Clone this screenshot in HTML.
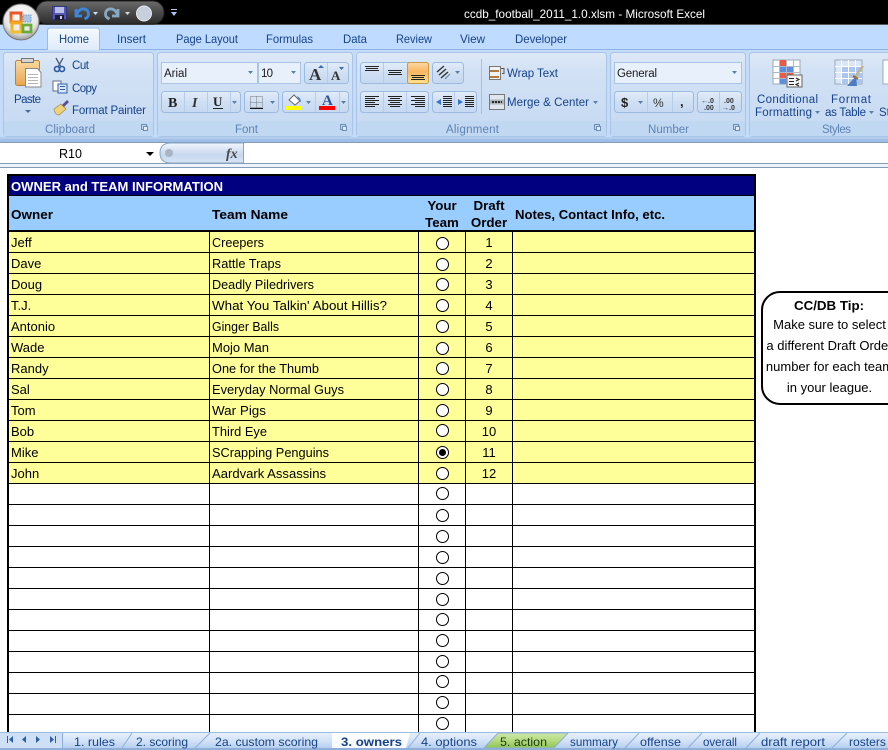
<!DOCTYPE html>
<html><head><meta charset="utf-8"><style>
html,body{margin:0;padding:0;background:#fff;width:888px;height:750px;overflow:hidden}
svg{display:block}
text{font-family:"Liberation Sans",Arial,sans-serif}
text.s{font-family:"Liberation Serif",serif}
.u{font-size:11.5px;fill:#15428b}
.g{font-size:11.5px;fill:#5f83b3}
.k{font-size:11.5px;fill:#1a1a1a}
.c{font-size:13px;fill:#000}
.b{font-size:13.33px;font-weight:bold;fill:#000}
.m{text-anchor:middle}
.t{font-size:12px;fill:#15428b}
</style></head><body>
<svg width="888" height="750" viewBox="0 0 888 750" xmlns="http://www.w3.org/2000/svg">
<defs>
<linearGradient id="gr" x1="0" y1="0" x2="0" y2="1"><stop offset="0" stop-color="#dfe9f7"/><stop offset=".2" stop-color="#d3e2f5"/><stop offset="1" stop-color="#c5d9f2"/></linearGradient>
<linearGradient id="hm" x1="0" y1="0" x2="0" y2="1"><stop offset="0" stop-color="#f6fafe"/><stop offset="1" stop-color="#dfeafa"/></linearGradient>
<linearGradient id="bt" x1="0" y1="0" x2="0" y2="1"><stop offset="0" stop-color="#e2ecf9"/><stop offset=".5" stop-color="#cfdff3"/><stop offset="1" stop-color="#c6d9f1"/></linearGradient>
<linearGradient id="or" x1="0" y1="0" x2="0" y2="1"><stop offset="0" stop-color="#fcd9a5"/><stop offset=".45" stop-color="#fbb55d"/><stop offset="1" stop-color="#fee38f"/></linearGradient>
<linearGradient id="qa" x1="0" y1="0" x2="0" y2="1"><stop offset="0" stop-color="#6b6b6b"/><stop offset=".5" stop-color="#4a4a4a"/><stop offset="1" stop-color="#2a2a2a"/></linearGradient>
<linearGradient id="tb" x1="0" y1="0" x2="0" y2="1"><stop offset="0" stop-color="#e8f1fc"/><stop offset=".5" stop-color="#d2e2f7"/><stop offset="1" stop-color="#adc9ee"/></linearGradient>
<linearGradient id="tg" x1="0" y1="0" x2="0" y2="1"><stop offset="0" stop-color="#cbe7a8"/><stop offset=".5" stop-color="#b5da80"/><stop offset="1" stop-color="#8ec455"/></linearGradient>
<linearGradient id="tw" x1="0" y1="0" x2="0" y2="1"><stop offset="0" stop-color="#fff"/><stop offset="1" stop-color="#f4f8fe"/></linearGradient>
<linearGradient id="fx" x1="0" y1="0" x2="0" y2="1"><stop offset="0" stop-color="#f2f6fc"/><stop offset=".6" stop-color="#c6d7ee"/><stop offset="1" stop-color="#d9e5f5"/></linearGradient>
<radialGradient id="ob" cx=".5" cy=".35" r=".65"><stop offset="0" stop-color="#ffffff"/><stop offset=".7" stop-color="#e6e6e6"/><stop offset="1" stop-color="#9a9a9a"/></radialGradient>
<linearGradient id="pb" x1="0" y1="0" x2="0" y2="1"><stop offset="0" stop-color="#fbd9a0"/><stop offset="1" stop-color="#eaa650"/></linearGradient>
<linearGradient id="lo" x1="0" y1="0" x2="0" y2="1"><stop offset="0" stop-color="#e8562e"/><stop offset="1" stop-color="#e88a20"/></linearGradient>
<linearGradient id="ly" x1="0" y1="0" x2="0" y2="1"><stop offset="0" stop-color="#f6a81c"/><stop offset="1" stop-color="#f0c030"/></linearGradient>
</defs>

<!-- title bar -->
<rect width="888" height="25" fill="#000"/>
<rect y="24" width="888" height="1" fill="#555"/>
<rect x="36" y="1" width="128" height="23" rx="11" fill="url(#qa)" stroke="#222"/>
<!-- save -->
<rect x="52.500" y="6.500" width="14" height="13" fill="#5558b0" stroke="#2c2f80" stroke-width=".8"/>
<rect x="55" y="7" width="9" height="6" fill="#b9bde8"/>
<rect x="55" y="15" width="9" height="5" fill="#1c1c3c"/><rect x="60" y="16" width="2" height="3" fill="#d0d0e0"/>
<!-- undo -->
<path d="M76 9v7h6 M76.500 15c2-8 12-8 12-1c0 3-2 4-4 5" fill="none" stroke="#3f86da" stroke-width="2.800"/>
<path d="M93 12h5l-2.500 3z" fill="#cfe0f5"/>
<!-- redo -->
<path d="M118 9v7h-6 M117.500 15c-2-8-12-8-12-1c0 3 2 4 4 5" fill="none" stroke="#86a8c2" stroke-width="2.800"/>
<path d="M125 12h5l-2.500 3z" fill="#dcdcdc"/>
<circle cx="144" cy="13.500" r="7.500" fill="#c6cfde" stroke="#e8e8e8"/>
<path d="M171 9h6v1h-6z M171 12h6l-3 4z" fill="#a8c8f0"/>
<text x="464" y="18" font-size="12" fill="#fff" textLength="241" lengthAdjust="spacingAndGlyphs">ccdb_football_2011_1.0.xlsm - Microsoft Excel</text>

<!-- tabs strip -->
<rect y="25" width="888" height="25" fill="#bfdbff"/>
<rect y="49" width="888" height="1" fill="#8db2e3"/>
<rect y="50" width="888" height="89" fill="#c4dbf9"/>
<path d="M47.500 50v-19q0-3 3-3h46q3 0 3 3v19" fill="url(#hm)" stroke="#9dbbe0"/>
<text class="t" x="59" y="43" textLength="30" lengthAdjust="spacingAndGlyphs">Home</text>
<text class="t" x="117" y="43" textLength="29" lengthAdjust="spacingAndGlyphs">Insert</text>
<text class="t" x="176" y="43" textLength="62" lengthAdjust="spacingAndGlyphs">Page Layout</text>
<text class="t" x="266" y="43" textLength="47" lengthAdjust="spacingAndGlyphs">Formulas</text>
<text class="t" x="343" y="43" textLength="24" lengthAdjust="spacingAndGlyphs">Data</text>
<text class="t" x="396" y="43" textLength="36" lengthAdjust="spacingAndGlyphs">Review</text>
<text class="t" x="460" y="43" textLength="25" lengthAdjust="spacingAndGlyphs">View</text>
<text class="t" x="515" y="43" textLength="52" lengthAdjust="spacingAndGlyphs">Developer</text>

<!-- office button -->
<circle cx="21" cy="22" r="18" fill="url(#ob)" stroke="#777"/>
<path d="M11 13h10v9H11z" fill="none" stroke="url(#lo)" stroke-width="3"/>
<path d="M12 23h9v9h-9z" fill="none" stroke="url(#ly)" stroke-width="3"/>
<path d="M23 25h8v7h-8z" fill="none" stroke="#6bab3e" stroke-width="2.800"/>
<rect x="23" y="15" width="8" height="7" fill="#a9c8ea" stroke="#6f97c8" stroke-dasharray="1.500 1"/>

<!-- groups -->
<g stroke="#a9c4e6" fill="url(#gr)">
<rect x="3.500" y="52.500" width="150" height="84" rx="3"/>
<rect x="157.500" y="52.500" width="195" height="84" rx="3"/>
<rect x="356.500" y="52.500" width="250" height="84" rx="3"/>
<rect x="610.500" y="52.500" width="135" height="84" rx="3"/>
<rect x="749.500" y="52.500" width="145" height="84" rx="3"/>
</g>
<g fill="#c1d8f2">
<rect x="4" y="121" width="149" height="15"/><rect x="158" y="121" width="194" height="15"/><rect x="357" y="121" width="249" height="15"/><rect x="611" y="121" width="134" height="15"/><rect x="750" y="121" width="138" height="15"/>
</g>
<text class="g" x="45" y="133" textLength="50">Clipboard</text>
<text class="g" x="235" y="133" textLength="23">Font</text>
<text class="g" x="446" y="133" textLength="53">Alignment</text>
<text class="g" x="648" y="133" textLength="41">Number</text>
<text class="g" x="822" y="133" textLength="29">Styles</text>
<g fill="none" stroke="#6a8cb5"><rect x="141.500" y="124.500" width="5" height="5"/><rect x="340.500" y="124.500" width="5" height="5"/><rect x="594.500" y="124.500" width="5" height="5"/><rect x="733.500" y="124.500" width="5" height="5"/></g>
<g fill="#e4eefb"><rect x="143.500" y="126.500" width="4" height="4" stroke="#6a8cb5"/><rect x="342.500" y="126.500" width="4" height="4" stroke="#6a8cb5"/><rect x="596.500" y="126.500" width="4" height="4" stroke="#6a8cb5"/><rect x="735.500" y="126.500" width="4" height="4" stroke="#6a8cb5"/></g>

<!-- clipboard -->
<rect x="15.500" y="60.500" width="24" height="25" rx="2" fill="url(#pb)" stroke="#b58340"/>
<rect x="21.500" y="58.500" width="12" height="4" fill="#d6d6d6" stroke="#777"/>
<path d="M25.500 68.500h12l3.500 4v14.500H25.500z" fill="#fff" stroke="#8a8a8a"/>
<path d="M28 74.500h10M28 77.500h10M28 80.500h10M28 83.500h10" stroke="#b5b5b5"/>
<text class="u" x="14" y="103" textLength="27">Paste</text>
<path d="M25 110h6l-3 3z" fill="#4a6a9a"/>
<path d="M56 58l5 9M63 58l-5 9" stroke="#4f5f7a" stroke-width="1.300"/>
<circle cx="57" cy="69" r="2.500" fill="none" stroke="#2c56a8" stroke-width="1.600"/><circle cx="62" cy="69" r="2.500" fill="none" stroke="#2c56a8" stroke-width="1.600"/>
<text class="u" x="72" y="69" textLength="17">Cut</text>
<rect x="53" y="81" width="8" height="10" fill="#fff" stroke="#6a6a8a"/><rect x="58" y="84" width="9" height="9" fill="#dbe8fa" stroke="#2f5da8"/>
<path d="M60 86.500h5M60 89.500h5" stroke="#2f5da8"/>
<text class="u" x="72" y="92" textLength="25">Copy</text>
<path d="M54 109l7-5l5 5l-7 6q-4 0-5-6z" fill="#f1d27a" stroke="#a08a40" stroke-width=".7"/>
<path d="M62 105l5-5l2 2l-5 5z" fill="#5a4aa0"/>
<text class="u" x="72" y="114" textLength="74">Format Painter</text>

<!-- font -->
<rect x="161.500" y="62.500" width="96" height="21" fill="#e8f0fb" stroke="#a9c4e6"/>
<rect x="258.500" y="62.500" width="42" height="21" fill="#e8f0fb" stroke="#a9c4e6"/>
<text class="k" x="164" y="77" font-size="12" textLength="23">Arial</text>
<text class="k" x="261" y="77" textLength="12">10</text>
<path d="M248 71h5l-2.500 3zM291 71h5l-2.500 3z" fill="#5a7ea8"/>
<rect x="304.500" y="62.500" width="44" height="21" rx="3" fill="url(#bt)" stroke="#9dbbe0"/>
<path d="M327.500 63v20" stroke="#b6cce8"/>
<text class="s" x="309" y="80" font-size="17" font-weight="bold" fill="#333">A</text>
<path d="M318 68h6l-3-3z" fill="#3d6bb0"/>
<text class="s" x="331" y="80" font-size="13" font-weight="bold" fill="#333">A</text>
<path d="M339 67h5l-2.500 3z" fill="#3d6bb0"/>
<rect x="161.500" y="91.500" width="79" height="21" rx="3" fill="url(#bt)" stroke="#9dbbe0"/>
<path d="M184.500 92v20M207.500 92v20M230.500 92v20" stroke="#b6cce8"/>
<text class="s" x="168" y="107" font-size="14" font-weight="bold" fill="#222">B</text>
<text class="s" x="192" y="107" font-size="14" font-weight="bold" font-style="italic" fill="#333">I</text>
<text class="s" x="213" y="106" font-size="13" font-weight="bold" fill="#222">U</text>
<path d="M213 108.500h10" stroke="#222"/>
<path d="M232 101h5l-2.500 3z" fill="#5a7ea8"/>
<rect x="244.500" y="91.500" width="34" height="21" rx="3" fill="url(#bt)" stroke="#9dbbe0"/>
<path d="M250.500 96.500h12v11h-12zM256.500 96.500v11M250.500 102.500h12" fill="none" stroke="#777" stroke-dasharray="1 1"/>
<path d="M250 108.500h13" stroke="#111"/>
<path d="M270 101h5l-2.500 3z" fill="#5a7ea8"/>
<rect x="282.500" y="91.500" width="66" height="21" rx="3" fill="url(#bt)" stroke="#9dbbe0"/>
<path d="M315.500 92v20M339.500 92v20" stroke="#b6cce8"/>
<path d="M289 100l5-5l6 6l-5 4z" fill="#fff" stroke="#666"/><path d="M297 96q4 2 4 6l-2-1z" fill="#4a7fc8"/>
<rect x="286" y="106" width="16" height="4" fill="#ff0"/>
<path d="M306 101h5l-2.500 3z" fill="#5a7ea8"/>
<text class="s" x="322" y="105" font-size="15" font-weight="bold" fill="#2f5597">A</text>
<rect x="319" y="106" width="16" height="4" fill="#f00"/>
<path d="M341 101h5l-2.500 3z" fill="#5a7ea8"/>

<!-- alignment -->
<rect x="360.500" y="62.500" width="68" height="21" rx="3" fill="url(#bt)" stroke="#9dbbe0"/>
<path d="M383.500 63v20" stroke="#b6cce8"/>
<rect x="407.500" y="62.500" width="21" height="21" rx="2" fill="url(#or)" stroke="#c79a52"/>
<path d="M365 66.500h14M366 68.500h12M365 70.500h14M388 70.500h14M389 72.500h12M388 74.500h14M411 75.500h14M412 77.500h12M411 79.500h14" stroke="#222"/>
<rect x="432.500" y="62.500" width="31" height="21" rx="3" fill="url(#bt)" stroke="#9dbbe0"/>
<path d="M437 72l7-6M439 75l7-6M441 78l7-6" stroke="#333" stroke-width="1.400"/><path d="M445 79l5-5" stroke="#5a7ea8"/>
<path d="M455 71h5l-2.500 3z" fill="#5a7ea8"/>
<rect x="360.500" y="91.500" width="68" height="21" rx="3" fill="url(#bt)" stroke="#9dbbe0"/>
<path d="M383.500 92v20M406.500 92v20" stroke="#b6cce8"/>
<path d="M365 96.500h14M365 98.500h10M365 100.500h14M365 102.500h10M365 104.500h14M365 106.500h10M388 96.500h14M390 98.500h10M388 100.500h14M390 102.500h10M388 104.500h14M390 106.500h10M411 96.500h14M415 98.500h10M411 100.500h14M415 102.500h10M411 104.500h14M415 106.500h10" stroke="#222"/>
<rect x="432.500" y="91.500" width="44" height="21" rx="3" fill="url(#bt)" stroke="#9dbbe0"/>
<path d="M454.500 92v20" stroke="#b6cce8"/>
<path d="M443 96.500h9M443 98.500h9M443 100.500h9M443 102.500h9M443 104.500h9M443 106.500h9M465 96.500h9M465 98.500h9M465 100.500h9M465 102.500h9M465 104.500h9M465 106.500h9" stroke="#222"/>
<path d="M436 102l5-3v6zM463 102l-5-3v6z" fill="#3b74c8"/>
<path d="M481.500 59v55" stroke="#a9bfda"/>
<rect x="489.500" y="66.500" width="11" height="13" fill="#f2f2f2" stroke="#777"/>
<path d="M490 71h9" stroke="#b07a40" stroke-width="2"/><path d="M490 77h9" stroke="#b07a40" stroke-width="2"/><path d="M501 68.500h3v5h-2" fill="none" stroke="#555"/>
<text class="u" x="507" y="77" textLength="51">Wrap Text</text>
<rect x="489.500" y="94.500" width="15" height="15" fill="#dfe6ee" stroke="#777"/>
<path d="M490 102h14" stroke="#555" stroke-width="5" opacity=".35"/>
<path d="M492 102h10" stroke="#222" stroke-width="2" stroke-dasharray="2 1"/>
<text class="u" x="507" y="106" textLength="82">Merge &amp; Center</text>
<path d="M593 101h5l-2.500 3z" fill="#5a7ea8"/>

<!-- number -->
<rect x="614.500" y="62.500" width="127" height="21" fill="#e8f0fb" stroke="#a9c4e6"/>
<text class="k" x="617" y="77" textLength="40">General</text>
<path d="M732 71h5l-2.500 3z" fill="#5a7ea8"/>
<rect x="614.500" y="91.500" width="79" height="21" rx="3" fill="url(#bt)" stroke="#9dbbe0"/>
<path d="M647.500 92v20M672.500 92v20" stroke="#b6cce8"/>
<text x="621" y="107" font-size="13" font-weight="bold" fill="#222">$</text>
<path d="M638 101h5l-2.500 3z" fill="#5a7ea8"/>
<text x="653" y="107" font-size="12" fill="#333">%</text>
<text x="680" y="106" font-size="13" font-weight="bold" fill="#222">,</text>
<rect x="697.500" y="91.500" width="44" height="21" rx="3" fill="url(#bt)" stroke="#9dbbe0"/>
<path d="M719.500 92v20" stroke="#b6cce8"/>
<text x="701" y="103" font-size="7" font-weight="bold" fill="#333">←.0</text>
<text x="704" y="110" font-size="7" font-weight="bold" fill="#333">.00</text>
<text x="724" y="103" font-size="7" font-weight="bold" fill="#333">.00</text>
<text x="722" y="110" font-size="7" font-weight="bold" fill="#333">→.0</text>

<!-- styles -->
<g stroke="#9aa8b8" fill="#fff">
<rect x="773" y="60" width="27" height="24"/>
<rect x="835" y="60" width="27" height="24" fill="#dbe7f7"/>
<rect x="883" y="60" width="10" height="24"/>
</g>
<rect x="779" y="60" width="7" height="6" fill="#ec5a46"/><rect x="779" y="66" width="14" height="6" fill="#5d8fe0"/><rect x="779" y="72" width="14" height="6" fill="#ec5a46"/><rect x="779" y="78" width="7" height="6" fill="#5d8fe0"/>
<path d="M779.500 60v24M786.500 60v24M793.500 60v24M773 66.500h27M773 72.500h27M773 78.500h27" stroke="#aeb8c6"/>
<rect x="787" y="75" width="15" height="12" fill="#f4f4f4" stroke="#666"/>
<path d="M789 78.500h5M789 81.500h5M789 84.500h5M796 78l3 1.500l-3 1.500M799 83l-3 1.500l3 1.500" stroke="#222" fill="none"/>
<rect x="842" y="66" width="20" height="18" fill="#a9c5f0"/>
<path d="M841.500 60v24M848.500 60v24M855.500 60v24M835 66.500h27M835 72.500h27M835 78.500h27" stroke="#fff"/>
<path d="M863 66l-9 12" stroke="#c0b090" stroke-width="2.500"/><path d="M856 76l-9 10h10z" fill="#4e7cc0"/><path d="M853 76l5 3" stroke="#a56a2a" stroke-width="2"/>
<text class="u" x="757" y="103" textLength="61">Conditional</text>
<text class="u" x="755" y="116" textLength="57">Formatting</text>
<path d="M815 111h5l-2.500 3z" fill="#5a7ea8"/>
<text class="u" x="831" y="103" textLength="40">Format</text>
<text class="u" x="825" y="116" textLength="41">as Table</text>
<path d="M869 111h5l-2.500 3z" fill="#5a7ea8"/>
<text class="u" x="879" y="116">St</text>

<!-- formula bar -->
<rect y="137" width="888" height="6" fill="#b3cdef"/>
<rect y="139" width="888" height="3" fill="#9fbfe8"/>
<rect y="142" width="888" height="22" fill="#fff"/>
<rect y="142" width="888" height="1" fill="#7f9db9"/>
<rect y="163" width="888" height="1" fill="#7f9db9"/>
<rect y="164" width="888" height="3" fill="#eef3fa"/>
<rect y="167" width="888" height="1" fill="#7f9db9"/>
<text x="59" y="158" font-size="12.500" fill="#000">R10</text>
<path d="M146 152h8l-4 4z" fill="#000"/>
<path d="M243.500 143H171q-11 0-11 10t11 10h72.500z" fill="url(#fx)" stroke="#8aa6c8"/>
<circle cx="169" cy="153" r="4" fill="#a9b4c4"/>
<text class="s" x="226" y="158" font-size="14" font-style="italic" font-weight="bold" fill="#4a4a4a">fx</text>

<!-- sheet -->
<rect x="7" y="174" width="749" height="560" fill="#000"/>
<rect x="9" y="176" width="745" height="19" fill="#000080"/>
<rect x="9" y="196" width="745" height="34" fill="#99ccff"/>
<rect x="9" y="232" width="745" height="252" fill="#ffff99"/>
<rect x="9" y="484" width="745" height="250" fill="#fff"/>
<path d="M9 252.500H754M9 273.500H754M9 294.500H754M9 315.500H754M9 336.500H754M9 357.500H754M9 378.500H754M9 399.500H754M9 420.500H754M9 441.500H754M9 462.500H754M9 483.500H754M9 504.500H754M9 525.500H754M9 546.500H754M9 567.500H754M9 588.500H754M9 609.500H754M9 630.500H754M9 651.500H754M9 672.500H754M9 693.500H754M9 714.500H754" stroke="#000"/>
<path d="M209.500 232V734M418.500 232V734M465.500 232V734M512.500 232V734" stroke="#000"/>
<text x="11" y="191" font-size="13.330" font-weight="bold" fill="#fff" textLength="212" lengthAdjust="spacingAndGlyphs">OWNER and TEAM INFORMATION</text>
<text class="b" x="11" y="219" textLength="42" lengthAdjust="spacingAndGlyphs">Owner</text>
<text class="b" x="212" y="219" textLength="76" lengthAdjust="spacingAndGlyphs">Team Name</text>
<text class="b m" x="442" y="210">Your</text>
<text class="b m" x="442" y="227">Team</text>
<text class="b m" x="489" y="210">Draft</text>
<text class="b m" x="489" y="227">Order</text>
<text class="b" x="515" y="219" textLength="150" lengthAdjust="spacingAndGlyphs">Notes, Contact Info, etc.</text>

<g>
<text class="c" x="11" y="247">Jeff</text><text class="c" x="212" y="247" textLength="52" lengthAdjust="spacingAndGlyphs">Creepers</text><text class="c m" x="489" y="247">1</text>
<text class="c" x="11" y="268">Dave</text><text class="c" x="212" y="268" textLength="69" lengthAdjust="spacingAndGlyphs">Rattle Traps</text><text class="c m" x="489" y="268">2</text>
<text class="c" x="11" y="289">Doug</text><text class="c" x="212" y="289" textLength="102" lengthAdjust="spacingAndGlyphs">Deadly Piledrivers</text><text class="c m" x="489" y="289">3</text>
<text class="c" x="11" y="310">T.J.</text><text class="c" x="212" y="310" textLength="175" lengthAdjust="spacingAndGlyphs">What You Talkin' About Hillis?</text><text class="c m" x="489" y="310">4</text>
<text class="c" x="11" y="331">Antonio</text><text class="c" x="212" y="331" textLength="67" lengthAdjust="spacingAndGlyphs">Ginger Balls</text><text class="c m" x="489" y="331">5</text>
<text class="c" x="11" y="352">Wade</text><text class="c" x="212" y="352" textLength="57" lengthAdjust="spacingAndGlyphs">Mojo Man</text><text class="c m" x="489" y="352">6</text>
<text class="c" x="11" y="373">Randy</text><text class="c" x="212" y="373" textLength="107" lengthAdjust="spacingAndGlyphs">One for the Thumb</text><text class="c m" x="489" y="373">7</text>
<text class="c" x="11" y="394">Sal</text><text class="c" x="212" y="394" textLength="132" lengthAdjust="spacingAndGlyphs">Everyday Normal Guys</text><text class="c m" x="489" y="394">8</text>
<text class="c" x="11" y="415">Tom</text><text class="c" x="212" y="415" textLength="54" lengthAdjust="spacingAndGlyphs">War Pigs</text><text class="c m" x="489" y="415">9</text>
<text class="c" x="11" y="436">Bob</text><text class="c" x="212" y="436" textLength="55" lengthAdjust="spacingAndGlyphs">Third Eye</text><text class="c m" x="489" y="436">10</text>
<text class="c" x="11" y="457">Mike</text><text class="c" x="212" y="457" textLength="117" lengthAdjust="spacingAndGlyphs">SCrapping Penguins</text><text class="c m" x="489" y="457">11</text>
<text class="c" x="11" y="478">John</text><text class="c" x="212" y="478" textLength="114" lengthAdjust="spacingAndGlyphs">Aardvark Assassins</text><text class="c m" x="489" y="478">12</text>
</g>

<g fill="#fff" stroke="#000">
<circle cx="442.500" cy="243.500" r="6"/><circle cx="442.500" cy="264.500" r="6"/><circle cx="442.500" cy="284.500" r="6"/><circle cx="442.500" cy="305.500" r="6"/><circle cx="442.500" cy="326.500" r="6"/><circle cx="442.500" cy="348.500" r="6"/><circle cx="442.500" cy="368.500" r="6"/><circle cx="442.500" cy="389.500" r="6"/><circle cx="442.500" cy="410.500" r="6"/><circle cx="442.500" cy="430.500" r="6"/><circle cx="442.500" cy="452.500" r="6"/><circle cx="442.500" cy="473.500" r="6"/><circle cx="442.500" cy="493.500" r="6"/><circle cx="442.500" cy="515.500" r="6"/><circle cx="442.500" cy="536.500" r="6"/><circle cx="442.500" cy="557.500" r="6"/><circle cx="442.500" cy="578.500" r="6"/><circle cx="442.500" cy="599.500" r="6"/><circle cx="442.500" cy="619.500" r="6"/><circle cx="442.500" cy="640.500" r="6"/><circle cx="442.500" cy="661.500" r="6"/><circle cx="442.500" cy="681.500" r="6"/><circle cx="442.500" cy="702.500" r="6"/><circle cx="442.500" cy="723.500" r="6"/>
</g>
<circle cx="442.500" cy="452.500" r="3.500" fill="#000"/>

<!-- tip box -->
<rect x="762" y="292" width="160" height="112" rx="18" fill="#fff" stroke="#000" stroke-width="2"/>
<text class="b m" x="829" y="310">CC/DB Tip:</text>
<text class="c m" x="829.500" y="329">Make sure to select</text>
<text class="c m" x="829.500" y="350">a different Draft Order</text>
<text class="c m" x="829.500" y="371">number for each team</text>
<text class="c m" x="829.500" y="392">in your league.</text>

<!-- sheet tab bar -->
<rect y="732" width="888" height="18" fill="url(#tb)"/>
<rect y="732" width="888" height="1" fill="#9fbbe0"/>
<rect y="748" width="888" height="2" fill="#8faed8"/>
<rect y="733" width="62" height="15" fill="#cfe0f6"/>
<path d="M7.500 736v7" stroke="#2d5fa8"/><path d="M13 736l-4 3.500l4 3.500z" fill="#2d5fa8"/>
<path d="M26 736l-4 3.500l4 3.500z" fill="#2d5fa8"/>
<path d="M36 736l4 3.500l-4 3.500z" fill="#2d5fa8"/>
<path d="M50 736l4 3.500l-4 3.500z" fill="#2d5fa8"/><path d="M55.500 736v7" stroke="#2d5fa8"/>
<rect x="62" y="733" width="1" height="15" fill="#8faed8"/>
<path d="M122 748l10-15M195 748l15-15M408 748l12-15M550 748l16-15M625 748l14-15M688 748l14-15M746 748l14-15M832 748l15-15" fill="none" stroke="#8faed8"/>
<path d="M332 733h78l-4 15h-74z" fill="url(#tw)"/>
<path d="M484 748l14-15h70l-14 15z" fill="url(#tg)" stroke="#8faed8"/>
<g>
<text class="t" x="74" y="746" textLength="41" lengthAdjust="spacingAndGlyphs">1. rules</text>
<text class="t" x="136" y="746" textLength="52" lengthAdjust="spacingAndGlyphs">2. scoring</text>
<text class="t" x="215" y="746" textLength="103" lengthAdjust="spacingAndGlyphs">2a. custom scoring</text>
<text x="341" y="746" font-size="12" font-weight="bold" fill="#15428b" textLength="61" lengthAdjust="spacingAndGlyphs">3. owners</text>
<text class="t" x="421" y="746" textLength="56" lengthAdjust="spacingAndGlyphs">4. options</text>
<text x="500" y="746" font-size="12" fill="#1c3a10" textLength="47" lengthAdjust="spacingAndGlyphs">5. action</text>
<text class="t" x="570" y="746" textLength="48" lengthAdjust="spacingAndGlyphs">summary</text>
<text class="t" x="640" y="746" textLength="41" lengthAdjust="spacingAndGlyphs">offense</text>
<text class="t" x="703" y="746" textLength="34" lengthAdjust="spacingAndGlyphs">overall</text>
<text class="t" x="761" y="746" textLength="64" lengthAdjust="spacingAndGlyphs">draft report</text>
<text class="t" x="849" y="746" textLength="37" lengthAdjust="spacingAndGlyphs">rosters</text>
</g>
</svg>
</body></html>
